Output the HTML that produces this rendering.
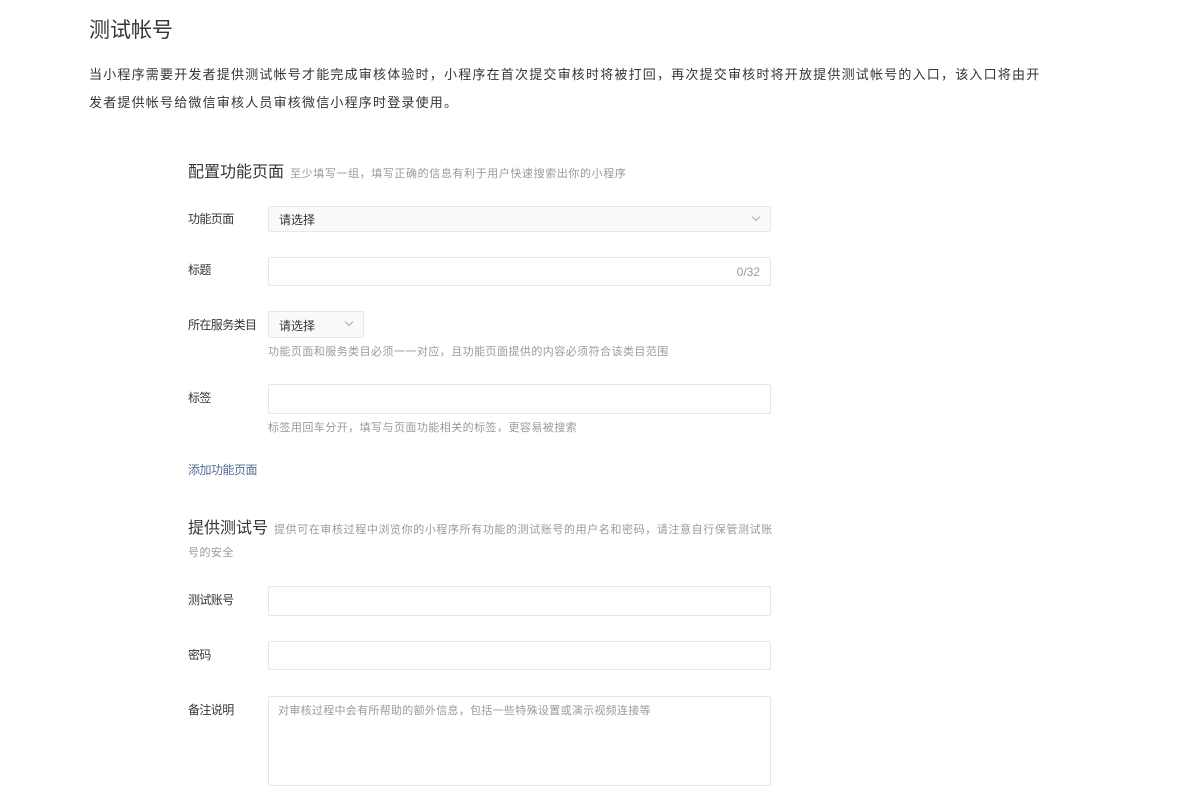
<!DOCTYPE html>
<html><head><meta charset="utf-8"><style>
*{margin:0;padding:0;box-sizing:border-box}
body{width:1182px;height:769px;overflow:hidden;background:#fff;font-family:"Liberation Sans","Noto Sans CJK SC",sans-serif;color:#353535;position:relative}
.a{position:absolute;white-space:nowrap}
.h1{left:89px;top:14px;font-size:21px;color:#353535}
.p{left:89px;font-size:13px;color:#353535;letter-spacing:1.2px}
.st{left:188px;font-size:16px;color:#353535}
.st span{font-size:11px;color:#9a9a9a;margin-left:6px;letter-spacing:0.6px}
.lb{left:188px;font-size:12px;color:#353535;letter-spacing:-0.6px}
.in{position:absolute;left:268px;width:503px;border:1px solid #e7e7eb;border-radius:2px;background:#fff}
.hint{left:268px;font-size:11px;color:#9a9a9a;letter-spacing:0.45px}
.chev{position:absolute;width:6px;height:6px;border-right:1px solid #aaa;border-bottom:1px solid #aaa;transform:rotate(45deg)}
</style></head><body>
<div class="a h1">测试帐号</div>
<div class="a p" style="top:64px">当小程序需要开发者提供测试帐号才能完成审核体验时，小程序在首次提交审核时将被打回，再次提交审核时将开放提供测试帐号的入口，该入口将由开</div>
<div class="a p" style="top:92px">发者提供帐号给微信审核人员审核微信小程序时登录使用。</div>

<div class="a st" style="top:158px">配置功能页面<span>至少填写一组，填写正确的信息有利于用户快速搜索出你的小程序</span></div>

<div class="a lb" style="top:210px">功能页面</div>
<div class="in" style="top:206px;height:26px;background:#fafafa"><div class="a" style="left:10px;top:4px;font-size:12px;color:#353535">请选择</div><div class="chev" style="right:11px;top:7px"></div></div>

<div class="a lb" style="top:261px">标题</div>
<div class="in" style="top:257px;height:29px"><div class="a" style="right:10px;top:7px;font-size:12px;color:#9a9a9a">0/32</div></div>

<div class="a lb" style="top:316px">所在服务类目</div>
<div class="in" style="top:311px;height:27px;width:96px;background:#fafafa"><div class="a" style="left:10px;top:5px;font-size:12px;color:#353535">请选择</div><div class="chev" style="right:11px;top:7px"></div></div>
<div class="a hint" style="top:343px">功能页面和服务类目必须一一对应，且功能页面提供的内容必须符合该类目范围</div>

<div class="a lb" style="top:389px">标签</div>
<div class="in" style="top:384px;height:30px"></div>
<div class="a hint" style="top:419px">标签用回车分开，填写与页面功能相关的标签，更容易被搜索</div>

<div class="a" style="left:188px;top:461px;font-size:12px;color:#576b95;letter-spacing:-0.5px">添加功能页面</div>

<div class="a st" style="top:514px">提供测试号<span>提供可在审核过程中浏览你的小程序所有功能的测试账号的用户名和密码，请注意自行保管测试账</span></div>
<div class="a hint" style="left:188px;top:544px">号的安全</div>

<div class="a lb" style="top:591px">测试账号</div>
<div class="in" style="top:586px;height:30px"></div>

<div class="a lb" style="top:646px">密码</div>
<div class="in" style="top:641px;height:29px"></div>

<div class="a lb" style="top:701px">备注说明</div>
<div class="in" style="top:696px;height:90px"><div class="a" style="left:9px;top:5px;font-size:11px;color:#9a9a9a;letter-spacing:0.3px">对审核过程中会有所帮助的额外信息，包括一些特殊设置或演示视频连接等</div></div>
</body></html>
